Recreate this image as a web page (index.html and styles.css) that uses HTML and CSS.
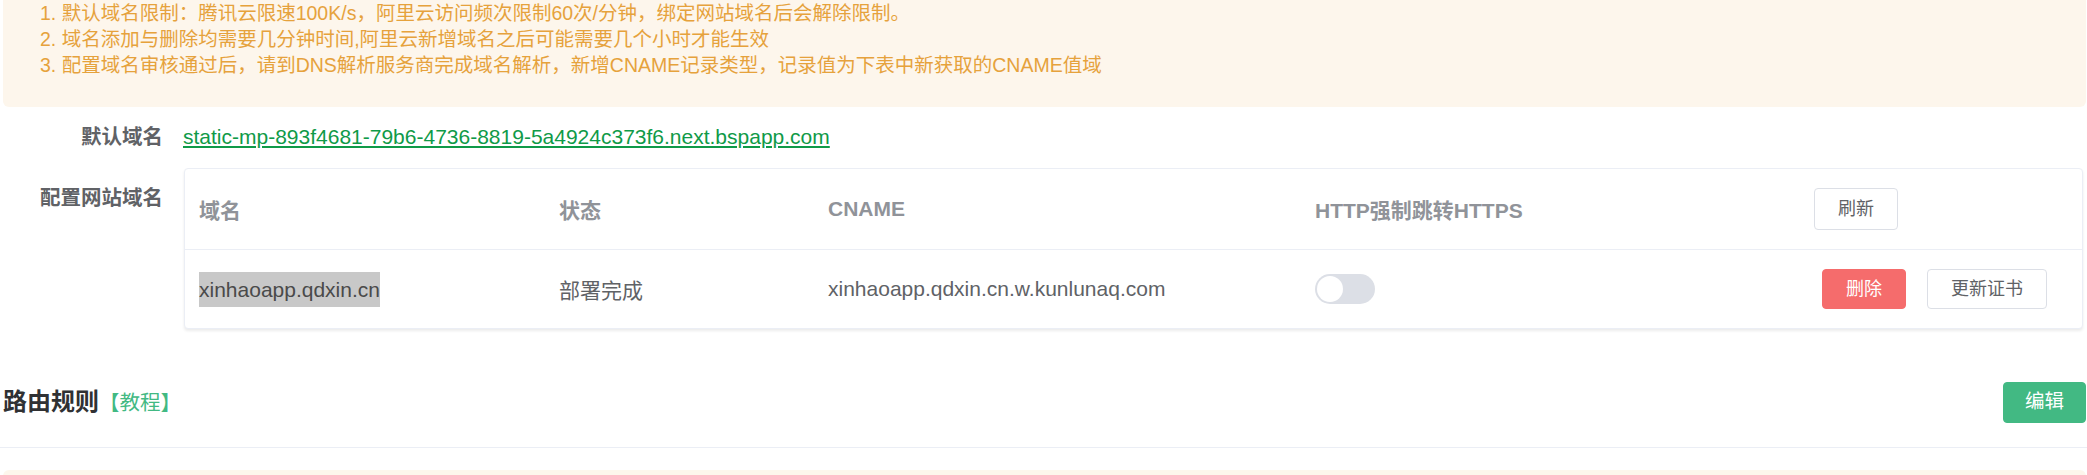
FILE: index.html
```html
<!DOCTYPE html>
<html lang="zh-CN">
<head>
<meta charset="utf-8">
<title>网站托管</title>
<link rel="stylesheet" href="styles.css">
</head>
<body>
<div class="page">
  <div class="alert">
    <p>1. 默认域名限制：腾讯云限速100K/s，阿里云访问频次限制60次/分钟，绑定网站域名后会解除限制。</p>
    <p>2. 域名添加与删除均需要几分钟时间,阿里云新增域名之后可能需要几个小时才能生效</p>
    <p>3. 配置域名审核通过后，请到DNS解析服务商完成域名解析，新增CNAME记录类型，记录值为下表中新获取的CNAME值域</p>
  </div>

  <div class="form-row form-row--first">
    <div class="form-label">默认域名</div>
    <a class="domain-link" href="#">static-mp-893f4681-79b6-4736-8819-5a4924c373f6.next.bspapp.com</a>
  </div>

  <div class="form-row form-row--table">
    <div class="form-label form-label--top">配置网站域名</div>
    <div class="card">
      <div class="grid grid--head">
        <div class="cell">域名</div>
        <div class="cell">状态</div>
        <div class="cell">CNAME</div>
        <div class="cell">HTTP强制跳转HTTPS</div>
        <div class="cell"><button class="btn btn--plain btn--tall">刷新</button></div>
      </div>
      <div class="grid grid--body">
        <div class="cell"><span class="selected">xinhaoapp.qdxin.cn</span></div>
        <div class="cell">部署完成</div>
        <div class="cell">xinhaoapp.qdxin.cn.w.kunlunaq.com</div>
        <div class="cell"><span class="switch"><span class="switch-knob"></span></span></div>
        <div class="cell cell--actions">
          <button class="btn btn--danger">删除</button>
          <button class="btn btn--plain">更新证书</button>
        </div>
      </div>
    </div>
  </div>

  <div class="section-head">
    <div class="section-title">路由规则<a class="tutorial" href="#">【教程】</a></div>
    <button class="btn btn--primary">编辑</button>
  </div>
  <div class="divider"></div>

  <div class="alert alert--next"></div>
</div>
</body>
</html>
```

FILE: styles.css
```css
html, body {
  margin: 0;
  padding: 0;
  background: #ffffff;
}

body {
  font-family: "Liberation Sans", "Noto Sans CJK SC", sans-serif;
  color: #606266;
  overflow: hidden;
}

.page {
  padding: 0 1px 0 3px;
}

.alert {
  background: #fdf6ec;
  color: #e6a23c;
  font-size: 19.5px;
  line-height: 26px;
  padding: 0 20px 29px 37px;
  border-radius: 0 0 6px 6px;
}

.alert p {
  margin: 0;
  white-space: nowrap;
}

.alert--next {
  margin-top: 22px;
  height: 80px;
  padding: 0;
  border-radius: 6px;
}

.form-row {
  display: flex;
  align-items: flex-start;
}

.form-row--first {
  margin-top: 12px;
  height: 36px;
  align-items: center;
}

.form-row--table {
  margin-top: 13px;
}

.form-label {
  width: 180px;
  flex: none;
  box-sizing: border-box;
  padding-right: 20px;
  text-align: right;
  font-size: 20.5px;
  font-weight: bold;
  color: #606266;
  line-height: 36px;
}

.form-label--top {
  padding-top: 12px;
}

.domain-link {
  color: #0f9a48;
  font-size: 21px;
  text-decoration: underline;
  line-height: 36px;
}

.card {
  flex: 1;
  margin: 0 3px 0 1px;
  border: 1px solid #ebeef5;
  border-radius: 4px;
  background: #fff;
  box-shadow: 0 2px 3px rgba(0, 0, 0, 0.08);
}

.grid {
  display: grid;
  grid-template-columns: 360px 269px 487px 499px 1fr;
  align-items: center;
}

.grid--head {
  height: 80px;
  border-bottom: 1px solid #ebeef5;
  color: #909399;
  font-weight: bold;
}

.grid--body {
  height: 78px;
  color: #606266;
}

.cell {
  padding: 0 14px;
  font-size: 21px;
  white-space: nowrap;
  display: flex;
  align-items: center;
}

.cell--actions {
  padding-left: 22px;
  gap: 21px;
}

.selected {
  background: #c8c8c8;
  color: #4a4a4a;
  line-height: 35px;
}

.switch {
  display: inline-block;
  position: relative;
  width: 60px;
  height: 30px;
  border-radius: 15px;
  background: #dcdfe6;
}

.switch-knob {
  position: absolute;
  left: 2px;
  top: 2px;
  width: 26px;
  height: 26px;
  border-radius: 50%;
  background: #fff;
}

.btn {
  font-family: "Liberation Sans", "Noto Sans CJK SC", sans-serif;
  font-size: 18px;
  height: 40px;
  padding: 0 23px;
  border-radius: 4px;
  border: 1px solid #dcdfe6;
  background: #fff;
  color: #606266;
  cursor: pointer;
  line-height: 1;
}

.btn--tall {
  height: 42px;
}

.btn--danger {
  background: #f56c6c;
  border-color: #f56c6c;
  color: #fff;
}

.btn--primary {
  background: #42b983;
  border-color: #42b983;
  color: #fff;
  font-size: 19.5px;
  height: 41px;
  padding: 0 21px;
}

.section-head {
  margin-top: 52px;
  display: flex;
  justify-content: space-between;
  align-items: center;
  padding-bottom: 24px;
}

.section-title {
  font-size: 24px;
  font-weight: bold;
  color: #303133;
  line-height: 41px;
}

.tutorial {
  color: #42b983;
  font-size: 20.5px;
  font-weight: normal;
  text-decoration: none;
}

.divider {
  height: 1px;
  background: #ebeef5;
  margin: 0 -1px 0 -3px;
}
```
